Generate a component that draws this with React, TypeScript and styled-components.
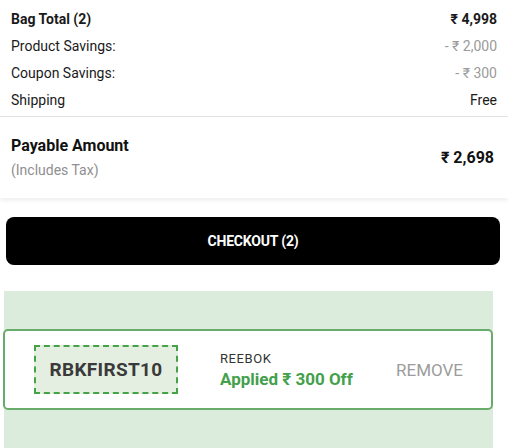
import React from "react";
import styled, { createGlobalStyle } from "styled-components";

const Global = createGlobalStyle`
  html, body { margin: 0; padding: 0; background: #fff; }
  body { font-family: Roboto, "Liberation Sans", Arial, sans-serif; color: #1a1a1a; }
  * { box-sizing: border-box; }
`;

const Page = styled.div`
  width: 508px;
  display: flex;
  flex-direction: column;
`;

const Summary = styled.section`
  display: flex;
  flex-direction: column;
  padding: 5px 11px 3px 11px;
  border-bottom: 1px solid #e2e2e2;
`;

const Row = styled.div`
  display: flex;
  justify-content: space-between;
  align-items: center;
  height: 27px;
  font-size: 14px;
`;

const Label = styled.span<{ $bold?: boolean }>`
  font-weight: ${(p) => (p.$bold ? 700 : 400)};
  color: #1a1a1a;
`;

const Value = styled.span<{ $bold?: boolean; $muted?: boolean }>`
  font-weight: ${(p) => (p.$bold ? 700 : 400)};
  color: ${(p) => (p.$muted ? "#9a9a9a" : "#1a1a1a")};
`;

const Payable = styled.section`
  display: flex;
  justify-content: space-between;
  align-items: center;
  height: 81px;
  padding: 0 14px 0 11px;
  box-shadow: 0 3px 4px rgba(0, 0, 0, 0.06);
`;

const PayLeft = styled.div`
  display: flex;
  flex-direction: column;
  gap: 7px;
  margin-top: -2px;
`;

const PayTitle = styled.span`
  font-size: 16px;
  font-weight: 700;
  color: #111;
`;

const PaySub = styled.span`
  font-size: 14px;
  color: #8f8f8f;
`;

const PayValue = styled.span`
  font-size: 16px;
  font-weight: 700;
  color: #111;
`;

const CheckoutButton = styled.button`
  margin: 19px 8px 0 6px;
  height: 48px;
  border: none;
  border-radius: 8px;
  background: #000;
  color: #fff;
  font-family: Roboto, "Liberation Sans", Arial, sans-serif;
  font-size: 14px;
  font-weight: 700;
  letter-spacing: -0.2px;
  cursor: pointer;
`;

const CouponPanel = styled.section`
  margin: 26px 15px 0 4px;
  padding: 38px 0 38px 0;
  background: #dcecdc;
`;

const CouponCard = styled.div`
  display: flex;
  align-items: center;
  height: 81px;
  margin-left: -1px;
  padding: 0 28px 0 29px;
  background: #fff;
  border: 2px solid #68ac6c;
  border-radius: 5px;
`;

const CodeBox = styled.div`
  display: flex;
  align-items: center;
  justify-content: center;
  width: 144px;
  height: 49px;
  background: #e4efe2;
  border: 2px dashed #45a247;
  font-size: 19px;
  font-weight: 700;
  color: #3a3a3a;
  letter-spacing: 0.3px;
`;

const CouponInfo = styled.div`
  display: flex;
  flex-direction: column;
  gap: 3px;
  margin-left: 42px;
  flex: 1;
`;

const Brand = styled.span`
  font-size: 13px;
  color: #333;
  letter-spacing: 0.6px;
`;

const Applied = styled.span`
  font-size: 17px;
  font-weight: 700;
  color: #43a04c;
`;

const RemoveButton = styled.button`
  border: none;
  background: none;
  padding: 0;
  font-family: Roboto, "Liberation Sans", Arial, sans-serif;
  font-size: 17px;
  color: #9c9c9c;
  cursor: pointer;
`;

export default function App() {
  return (
    <Page>
      <Global />
      <Summary>
        <Row>
          <Label $bold>Bag Total (2)</Label>
          <Value $bold>₹ 4,998</Value>
        </Row>
        <Row>
          <Label>Product Savings:</Label>
          <Value $muted>- ₹ 2,000</Value>
        </Row>
        <Row>
          <Label>Coupon Savings:</Label>
          <Value $muted>- ₹ 300</Value>
        </Row>
        <Row>
          <Label>Shipping</Label>
          <Value>Free</Value>
        </Row>
      </Summary>
      <Payable>
        <PayLeft>
          <PayTitle>Payable Amount</PayTitle>
          <PaySub>(Includes Tax)</PaySub>
        </PayLeft>
        <PayValue>₹ 2,698</PayValue>
      </Payable>
      <CheckoutButton>CHECKOUT (2)</CheckoutButton>
      <CouponPanel>
        <CouponCard>
          <CodeBox>RBKFIRST10</CodeBox>
          <CouponInfo>
            <Brand>REEBOK</Brand>
            <Applied>Applied ₹ 300 Off</Applied>
          </CouponInfo>
          <RemoveButton>REMOVE</RemoveButton>
        </CouponCard>
      </CouponPanel>
    </Page>
  );
}
